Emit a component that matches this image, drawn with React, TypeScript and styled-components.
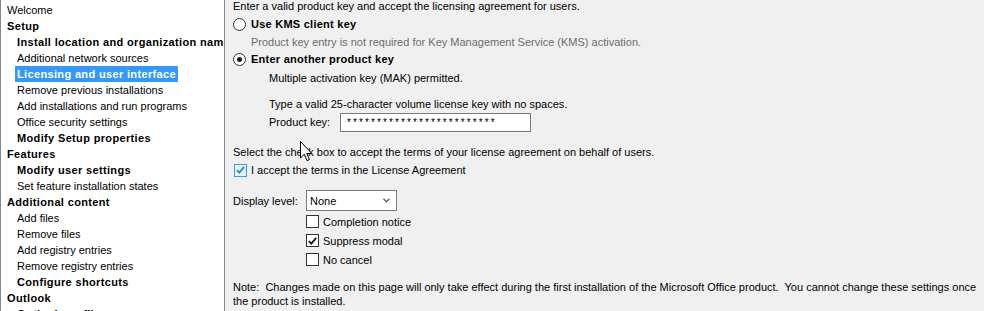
import React from 'react'
import styled, { createGlobalStyle } from 'styled-components'

const GlobalStyle = createGlobalStyle`
  html, body {
    margin: 0;
    padding: 0;
    background: #f0f0f0;
  }
  body {
    font-family: 'Liberation Sans', Arial, sans-serif;
    font-size: 11px;
    color: #000;
  }
`

const Frame = styled.div`
  display: flex;
  width: 984px;
  height: 311px;
  overflow: hidden;
  position: relative;
`

const NavPanel = styled.div`
  width: 223px;
  flex: none;
  background: #fff;
  border-left: 1px solid #828790;
  border-right: 1px solid #828790;
  padding-top: 2px;
  overflow: hidden;
`

const NavItem = styled.div<{ $sub?: boolean; $bold?: boolean }>`
  height: 16px;
  line-height: 16px;
  padding-left: ${(p) => (p.$sub ? 14 : 4)}px;
  font-weight: ${(p) => (p.$bold ? 700 : 400)};
  letter-spacing: ${(p) => (p.$bold ? 0.35 : 0)}px;
  white-space: nowrap;
`

const NavLabel = styled.span<{ $selected?: boolean }>`
  display: inline-block;
  padding: 0 2px;
  background: ${(p) => (p.$selected ? '#3399ff' : 'transparent')};
  color: ${(p) => (p.$selected ? '#fff' : '#000')};
`

const Content = styled.div`
  flex: 1;
  padding: 0 3px 0 8px;
  display: flex;
  flex-direction: column;
`

const Line = styled.div<{ $top?: number; $indent?: number; $muted?: boolean }>`
  height: 16px;
  line-height: 16px;
  margin-top: ${(p) => p.$top ?? 0}px;
  padding-left: ${(p) => p.$indent ?? 0}px;
  color: ${(p) => (p.$muted ? '#6d6d6d' : '#000')};
  white-space: nowrap;
`

const Intro = styled(Line)`
  height: 13px;
  line-height: 13px;
`

const OptionRow = styled.label<{ $top?: number }>`
  display: flex;
  align-items: center;
  gap: 5px;
  height: 16px;
  margin-top: ${(p) => p.$top ?? 0}px;
  font-weight: 700;
  letter-spacing: 0.25px;
`

const Radio = styled.span<{ $checked?: boolean }>`
  width: 11px;
  height: 11px;
  border: 1px solid #333;
  border-radius: 50%;
  background: #fff;
  display: flex;
  align-items: center;
  justify-content: center;
  &::after {
    content: '';
    width: 5px;
    height: 5px;
    border-radius: 50%;
    background: ${(p) => (p.$checked ? '#1a1a1a' : 'transparent')};
  }
`

const KeyRow = styled.div`
  display: flex;
  align-items: center;
  height: 20px;
  padding-left: 36px;
`

const KeyLabel = styled.span`
  width: 71px;
`

const KeyInput = styled.div`
  width: 183px;
  height: 17px;
  border: 1px solid #7a7a7a;
  background: #fff;
  padding-left: 6px;
  box-sizing: content-box;
  line-height: 17px;
  letter-spacing: 2.1px;
  font-size: 10px;
  overflow: hidden;
`

const CheckRow = styled.label<{ $top?: number; $indent?: number; $height?: number }>`
  display: flex;
  align-items: center;
  gap: 4px;
  height: ${(p) => p.$height ?? 16}px;
  margin-top: ${(p) => p.$top ?? 0}px;
  padding-left: ${(p) => p.$indent ?? 0}px;
  white-space: nowrap;
`

const Box = styled.span<{ $accent?: boolean }>`
  width: 11px;
  height: 11px;
  flex: none;
  border: 1px solid ${(p) => (p.$accent ? '#3c99e6' : '#333')};
  background: ${(p) => (p.$accent ? '#e6f2fc' : '#fff')};
  display: flex;
  align-items: center;
  justify-content: center;
  svg {
    display: block;
  }
`

const LevelRow = styled.div`
  display: flex;
  align-items: center;
  height: 21px;
  margin-top: 12px;
`

const LevelLabel = styled.span`
  width: 73px;
`

const Select = styled.div`
  width: 91px;
  height: 21px;
  border: 1px solid #7a7a7a;
  background: #fff;
  display: flex;
  align-items: center;
  justify-content: space-between;
  padding: 0 6px 0 3px;
  box-sizing: border-box;
`

const Note = styled.div`
  margin-top: 11px;
  line-height: 14px;
`

const Cursor = styled.svg`
  position: absolute;
  left: 300px;
  top: 141px;
`

const navItems: { text: string; sub?: boolean; bold?: boolean; selected?: boolean }[] = [
  { text: 'Welcome' },
  { text: 'Setup', bold: true },
  { text: 'Install location and organization name', sub: true, bold: true },
  { text: 'Additional network sources', sub: true },
  { text: 'Licensing and user interface', sub: true, bold: true, selected: true },
  { text: 'Remove previous installations', sub: true },
  { text: 'Add installations and run programs', sub: true },
  { text: 'Office security settings', sub: true },
  { text: 'Modify Setup properties', sub: true, bold: true },
  { text: 'Features', bold: true },
  { text: 'Modify user settings', sub: true, bold: true },
  { text: 'Set feature installation states', sub: true },
  { text: 'Additional content', bold: true },
  { text: 'Add files', sub: true },
  { text: 'Remove files', sub: true },
  { text: 'Add registry entries', sub: true },
  { text: 'Remove registry entries', sub: true },
  { text: 'Configure shortcuts', sub: true, bold: true },
  { text: 'Outlook', bold: true },
  { text: 'Outlook profile', sub: true, bold: true }
]

const Tick = ({ color }: { color: string }) => (
  <svg width="9" height="8" viewBox="0 0 9 8">
    <path d="M0.8 4.2 L3.3 6.7 L8.2 0.9" fill="none" stroke={color} strokeWidth="1.8" />
  </svg>
)

const App = (): JSX.Element => (
  <>
    <GlobalStyle />
    <Frame>
      <NavPanel>
        {navItems.map((item, index) => (
          <NavItem key={index} $sub={item.sub} $bold={item.bold}>
            <NavLabel $selected={item.selected}>{item.text}</NavLabel>
          </NavItem>
        ))}
      </NavPanel>
      <Content>
        <Intro>Enter a valid product key and accept the licensing agreement for users.</Intro>
        <OptionRow $top={3}>
          <Radio />
          Use KMS client key
        </OptionRow>
        <Line $top={2} $indent={18} $muted>
          Product key entry is not required for Key Management Service (KMS) activation.
        </Line>
        <OptionRow $top={1}>
          <Radio $checked />
          Enter another product key
        </OptionRow>
        <Line $top={3} $indent={36}>
          Multiple activation key (MAK) permitted.
        </Line>
        <Line $top={10} $indent={36}>
          Type a valid 25-character volume license key with no spaces.
        </Line>
        <KeyRow>
          <KeyLabel>Product key:</KeyLabel>
          <KeyInput>*************************</KeyInput>
        </KeyRow>
        <Line $top={12}>Select the check box to accept the terms of your license agreement on behalf of users.</Line>
        <CheckRow $top={2} $indent={1}>
          <Box $accent>
            <Tick color="#2b8ce0" />
          </Box>
          I accept the terms in the License Agreement
        </CheckRow>
        <LevelRow>
          <LevelLabel>Display level:</LevelLabel>
          <Select>
            None
            <svg width="7" height="5" viewBox="0 0 7 5">
              <path d="M0.5 0.8 L3.5 3.8 L6.5 0.8" fill="none" stroke="#606060" strokeWidth="1.3" />
            </svg>
          </Select>
        </LevelRow>
        <CheckRow $top={1} $indent={73} $height={19}>
          <Box />
          Completion notice
        </CheckRow>
        <CheckRow $indent={73} $height={19}>
          <Box>
            <Tick color="#1a1a1a" />
          </Box>
          Suppress modal
        </CheckRow>
        <CheckRow $indent={73} $height={19}>
          <Box />
          No cancel
        </CheckRow>
        <Note>
          Note:&nbsp; Changes made on this page will only take effect during the first installation of the Microsoft Office product.&nbsp; You
          cannot change these settings once the product is installed.
        </Note>
      </Content>
      <Cursor width="13" height="21" viewBox="0 0 13 21">
        <path d="M0.5 0.5 L0.5 17 L4.3 13.3 L7 19.6 L9.4 18.6 L6.8 12.5 L11.8 12.5 Z" fill="#fff" stroke="#000" strokeWidth="1" />
      </Cursor>
    </Frame>
  </>
)

export default App
